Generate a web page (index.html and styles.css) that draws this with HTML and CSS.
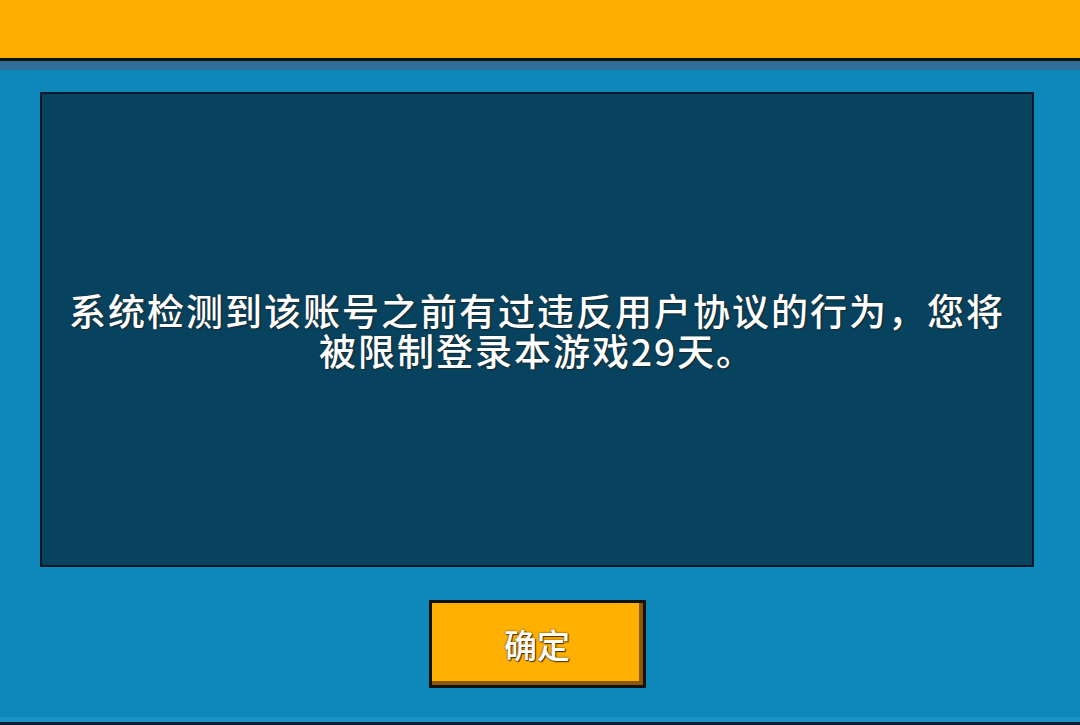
FILE: index.html
```html
<!DOCTYPE html>
<html lang="zh-CN">
<head>
  <meta charset="UTF-8" />
  <meta name="viewport" content="width=device-width, initial-scale=1.0"/>
  <title>提示</title>
  <link rel="stylesheet" href="styles.css">
</head>
<body>

  <div class="screen">
    <header class="top-bar"></header>

    <main class="dialog">
      <section class="message-box">
        <p class="message">系统检测到该账号之前有过违反用户协议的行为，您将被限制登录本游戏29天。</p>
      </section>

      <div class="actions">
        <button class="confirm">确定</button>
      </div>
    </main>
  </div>

</body>
</html>
```

FILE: styles.css
```css
* {
  box-sizing: border-box;
  margin: 0;
  padding: 0;
}

body {
  font-family: "Noto Sans CJK SC", "Noto Sans", sans-serif;
  background-color: #0e88bb;
  color: #fff;
}

.screen {
  height: 725px;
  display: flex;
  flex-direction: column;
  border-bottom: 3px solid #0c1a36;
  box-shadow: inset 0 -5px 0 #1a93c2;
}

.top-bar {
  height: 70px;
  background-color: #ffae00;
  box-shadow: inset 0 -9px 0 #2f6e98;
  position: relative;
}

.top-bar::after {
  content: "";
  position: absolute;
  left: 0;
  right: 0;
  bottom: 9px;
  height: 3px;
  background: #111;
}

.dialog {
  padding: 22px 46px 0 40px;
  display: flex;
  flex-direction: column;
}

.message-box {
  height: 475px;
  background-color: #07435e;
  border: 2px solid #0a1828;
  display: flex;
  align-items: center;
  justify-content: center;
  padding: 0 24px;
}

.message {
  font-size: 37px;
  font-weight: 500;
  letter-spacing: 2px;
  line-height: 40px;
  text-align: center;
  text-shadow: 0 0 2px #1a2a33, 1px 1px 1px #1a2a33;
}

.actions {
  display: flex;
  justify-content: center;
  margin-top: 33px;
}

.confirm {
  width: 217px;
  height: 88px;
  background-color: #ffb000;
  border: 3px solid #111;
  box-shadow: inset -4px -4px 0 #8c5a06;
  font-family: inherit;
  font-size: 33px;
  font-weight: 500;
  color: #fff;
  text-shadow: 0 0 2px #4a3000, 1px 1px 1px #4a3000;
  cursor: pointer;
}
```
